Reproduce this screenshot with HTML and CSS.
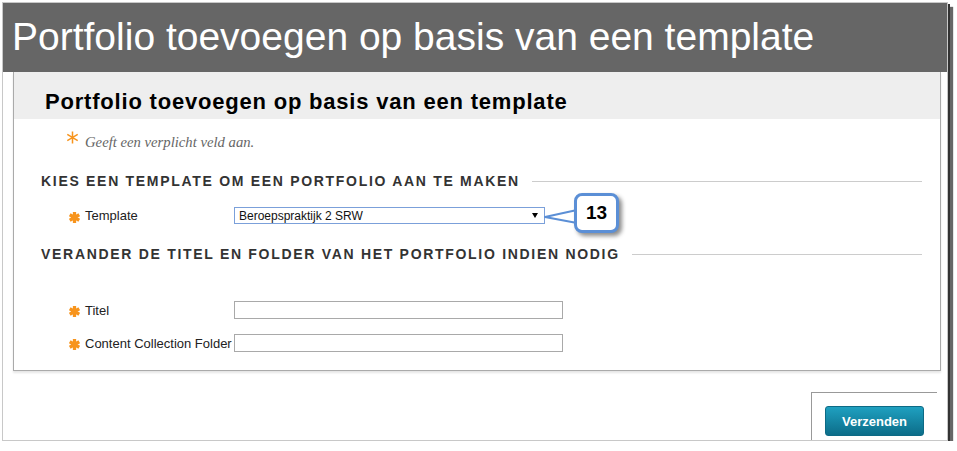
FILE: index.html
```html
<!DOCTYPE html>
<html lang="nl">
<head>
  <meta charset="UTF-8">
  <meta name="viewport" content="width=device-width, initial-scale=1.0">
  <title>Portfolio toevoegen op basis van een template</title>
  <link rel="stylesheet" href="styles.css">
</head>
<body>
<div class="frame">
  <header class="banner">Portfolio toevoegen op basis van een template</header>

  <main class="panel">
    <div class="panel-head">
      <h1>Portfolio toevoegen op basis van een template</h1>
    </div>

    <p class="note">
      <svg class="note-star" viewBox="0 0 12 12"><path d="M6 0.5V11.5M1.2 3.2L10.8 8.8M1.2 8.8L10.8 3.2" stroke="#f7941d" stroke-width="1.4" fill="none"/></svg>
      Geeft een verplicht veld aan.
    </p>

    <section class="step">
      <h2 class="step-title">Kies een template om een portfolio aan te maken</h2>
      <div class="field field-template">
        <label class="field-label">
          <svg class="star" viewBox="0 0 10 10"><path d="M5 0V10M0.7 2.5L9.3 7.5M0.7 7.5L9.3 2.5" stroke="#f7941d" stroke-width="3" fill="none"/></svg>
          Template
        </label>
        <div class="select">
          <span>Beroepspraktijk 2 SRW</span>
          <span class="select-arrow"></span>
        </div>
        <svg class="callout-pointer" viewBox="0 0 36 24"><polygon points="2,12 34,5 34,18" fill="#fff" stroke="#5b8fd6" stroke-width="2" stroke-linejoin="round"/></svg>
        <div class="callout">13</div>
      </div>
    </section>

    <section class="step">
      <h2 class="step-title step-title-second">Verander de titel en folder van het portfolio indien nodig</h2>
      <div class="field field-title">
        <label class="field-label">
          <svg class="star" viewBox="0 0 10 10"><path d="M5 0V10M0.7 2.5L9.3 7.5M0.7 7.5L9.3 2.5" stroke="#f7941d" stroke-width="3" fill="none"/></svg>
          Titel
        </label>
        <input class="input" type="text">
      </div>
      <div class="field field-folder">
        <label class="field-label">
          <svg class="star" viewBox="0 0 10 10"><path d="M5 0V10M0.7 2.5L9.3 7.5M0.7 7.5L9.3 2.5" stroke="#f7941d" stroke-width="3" fill="none"/></svg>
          Content Collection Folder
        </label>
        <input class="input" type="text">
      </div>
    </section>
  </main>

  <div class="submit-bar">
    <button class="btn-submit">Verzenden</button>
  </div>
</div>
</body>
</html>
```

FILE: styles.css
```css
body {
  margin: 0;
  background: #fff;
  font-family: "Liberation Sans", Arial, sans-serif;
}
.frame {
  margin: 2px 0 0 2px;
  width: 944px;
  height: 437px;
  border: 1px solid #c8c8c8;
  box-shadow: 2px 2px 0 #333, 5px 5px 1px #666;
}
.banner {
  height: 69px;
  box-sizing: border-box;
  padding: 11px 0 0 9px;
  background: #666;
  color: #fff;
  font-size: 39px;
  line-height: 46px;
}
.panel {
  margin-left: 10px;
  width: 928px;
  box-sizing: border-box;
  border: 1px solid #aaa;
  border-top: 0;
  padding-bottom: 18px;
  box-shadow: 0 2px 2px rgba(0, 0, 0, 0.1);
}
.panel-head {
  height: 47px;
  box-sizing: border-box;
  padding: 17px 0 0 31px;
  background: #eee;
}
.panel-head h1 {
  margin: 0;
  font-size: 22px;
  line-height: 25px;
  letter-spacing: 0.8px;
  color: #000;
}
.note {
  display: flex;
  align-items: flex-start;
  margin: 13px 0 0 52px;
  font: italic 14.7px/20px "Liberation Serif", "Times New Roman", serif;
  color: #666;
}
.note-star {
  width: 13px;
  height: 13px;
  margin: -1px 6px 0 0;
  flex: none;
}
.step-title {
  display: flex;
  align-items: center;
  margin: 21px 18px 0 27px;
  font-size: 14px;
  line-height: 16px;
  letter-spacing: 1.7px;
  text-transform: uppercase;
  color: #333;
}
.step-title::after {
  content: "";
  flex: 1;
  border-top: 1px solid #ccc;
  margin-left: 12px;
}
.step-title-second {
  margin-top: 22px;
}
.field {
  position: relative;
  display: flex;
  align-items: center;
  margin-left: 55px;
}
.field-template {
  margin-top: 18px;
}
.field-title {
  margin-top: 39px;
}
.field-folder {
  margin-top: 15px;
}
.field-label {
  display: flex;
  align-items: center;
  width: 165px;
  flex: none;
  font-size: 13px;
  color: #222;
}
.star {
  width: 11px;
  height: 11px;
  margin: 3px 5px 0 0;
  flex: none;
}
.select {
  display: flex;
  align-items: center;
  justify-content: space-between;
  width: 311px;
  height: 17px;
  box-sizing: border-box;
  padding: 0 6px 0 4px;
  border: 1px solid #7ba0da;
  font-size: 12px;
  color: #111;
}
.select-arrow {
  border-top: 5px solid #000;
  border-left: 3px solid transparent;
  border-right: 3px solid transparent;
}
.input {
  width: 329px;
  height: 18px;
  box-sizing: border-box;
  margin: 0;
  border: 1px solid #a9a9a9;
  padding: 0 3px;
}
.callout-pointer {
  position: absolute;
  left: 474px;
  top: -2px;
  width: 36px;
  height: 24px;
}
.callout {
  position: absolute;
  left: 505px;
  top: -14px;
  width: 45px;
  height: 40px;
  box-sizing: border-box;
  display: flex;
  align-items: center;
  justify-content: center;
  border: 3px solid #5b8fd6;
  border-radius: 8px;
  background: #fff;
  box-shadow: 3px 3px 4px rgba(0, 0, 0, 0.45);
  font-size: 19px;
  font-weight: bold;
  color: #000;
}
.submit-bar {
  margin: 21px 0 0 808px;
  width: 126px;
  height: 48px;
  box-sizing: border-box;
  padding: 13px 0 0 13px;
  border-top: 1px solid #999;
  border-left: 1px solid #999;
}
.btn-submit {
  width: 99px;
  height: 30px;
  border: 1px solid #0d6a85;
  border-radius: 3px;
  background: linear-gradient(#1fa0c0, #0c6d89);
  color: #fff;
  font: bold 13px "Liberation Sans", Arial, sans-serif;
}
```
